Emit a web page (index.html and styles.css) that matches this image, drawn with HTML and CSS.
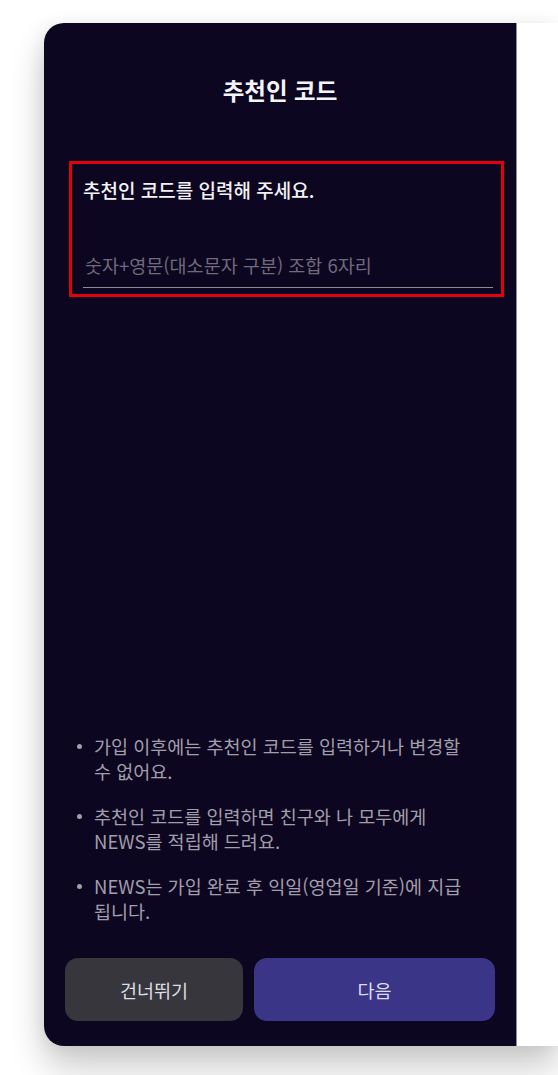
FILE: index.html
```html
<!DOCTYPE html>
<html lang="ko">
<head>
    <meta charset="UTF-8">
    <meta name="viewport" content="width=device-width, initial-scale=1.0">
    <title>추천인 코드</title>
    <link rel="stylesheet" href="styles.css">
</head>
<body>
    <div class="frame">
        <div class="screen">
            <header class="screen-header">
                <h1 class="title">추천인 코드</h1>
            </header>

            <div class="code-field">
                <label class="field-label" for="refCode">추천인 코드를 입력해 주세요.</label>
                <input id="refCode" class="field-input" type="text" maxlength="6" placeholder="숫자+영문(대소문자 구분) 조합 6자리">
            </div>

            <div class="spacer"></div>

            <ul class="notes">
                <li>가입 이후에는 추천인 코드를 입력하거나 변경할 수 없어요.</li>
                <li>추천인 코드를 입력하면 친구와 나 모두에게 NEWS를 적립해 드려요.</li>
                <li>NEWS는 가입 완료 후 익일(영업일 기준)에 지급 됩니다.</li>
            </ul>

            <div class="actions">
                <button class="btn btn-skip">건너뛰기</button>
                <button class="btn btn-next">다음</button>
            </div>
        </div>
    </div>
</body>
</html>
```

FILE: styles.css
```css
* {
    margin: 0;
    padding: 0;
    box-sizing: border-box;
    font-family: "Noto Sans CJK KR", "Noto Sans", sans-serif;
}

body {
    background: #ffffff;
    min-height: 100vh;
    padding: 23px 0 0 44px;
}

.frame {
    background: #ffffff;
    border-radius: 20px 0 0 20px;
    box-shadow: 0 20px 34px rgba(0, 0, 0, 0.22), -4px 0 16px rgba(0, 0, 0, 0.05);
}

.screen {
    width: 473px;
    height: 1023px;
    background: #0d0620;
    border-right: 1px solid #8e8b96;
    border-radius: 20px 0 0 20px;
    display: flex;
    flex-direction: column;
    padding: 0 21px 25px 21px;
}

.screen-header {
    padding-top: 52px;
    text-align: center;
}

.title {
    font-size: 23.5px;
    line-height: 30px;
    font-weight: 700;
    color: #f4f4f6;
}

.code-field {
    margin: 56px -9px 0 4px;
    border: 3px solid #e3000f;
    padding: 14px 8px 6px 11px;
    display: flex;
    flex-direction: column;
}

.field-label {
    font-size: 19px;
    line-height: 24px;
    font-weight: 500;
    color: #f2f2f4;
    margin-bottom: 41px;
}

.field-input {
    background: transparent;
    border: none;
    border-bottom: 1px solid #8c8a96;
    padding: 10px 0 10px 2px;
    font-size: 18.5px;
    line-height: 24px;
    color: #f2f2f4;
    outline: none;
}

.field-input::placeholder {
    color: #6f6a7c;
}

.spacer {
    flex: 1;
}

.notes {
    list-style: none;
    display: flex;
    flex-direction: column;
    gap: 20px;
    padding-right: 14px;
}

.notes li {
    display: flex;
    font-size: 18.5px;
    line-height: 25px;
    color: #a29eab;
    word-break: keep-all;
}

.notes li::before {
    content: "";
    flex-shrink: 0;
    width: 5px;
    height: 5px;
    border-radius: 50%;
    background: #a29eab;
    margin: 10px 12px 0 12px;
}

.actions {
    display: flex;
    gap: 11px;
    margin-top: 34px;
}

.btn {
    height: 63px;
    border: none;
    border-radius: 13px;
    font-size: 18.5px;
    color: #dcdce2;
    cursor: pointer;
}

.btn-skip {
    width: 178px;
    background: #36363c;
}

.btn-next {
    flex: 1;
    background: #3a3587;
    color: #dedbf2;
}
```
